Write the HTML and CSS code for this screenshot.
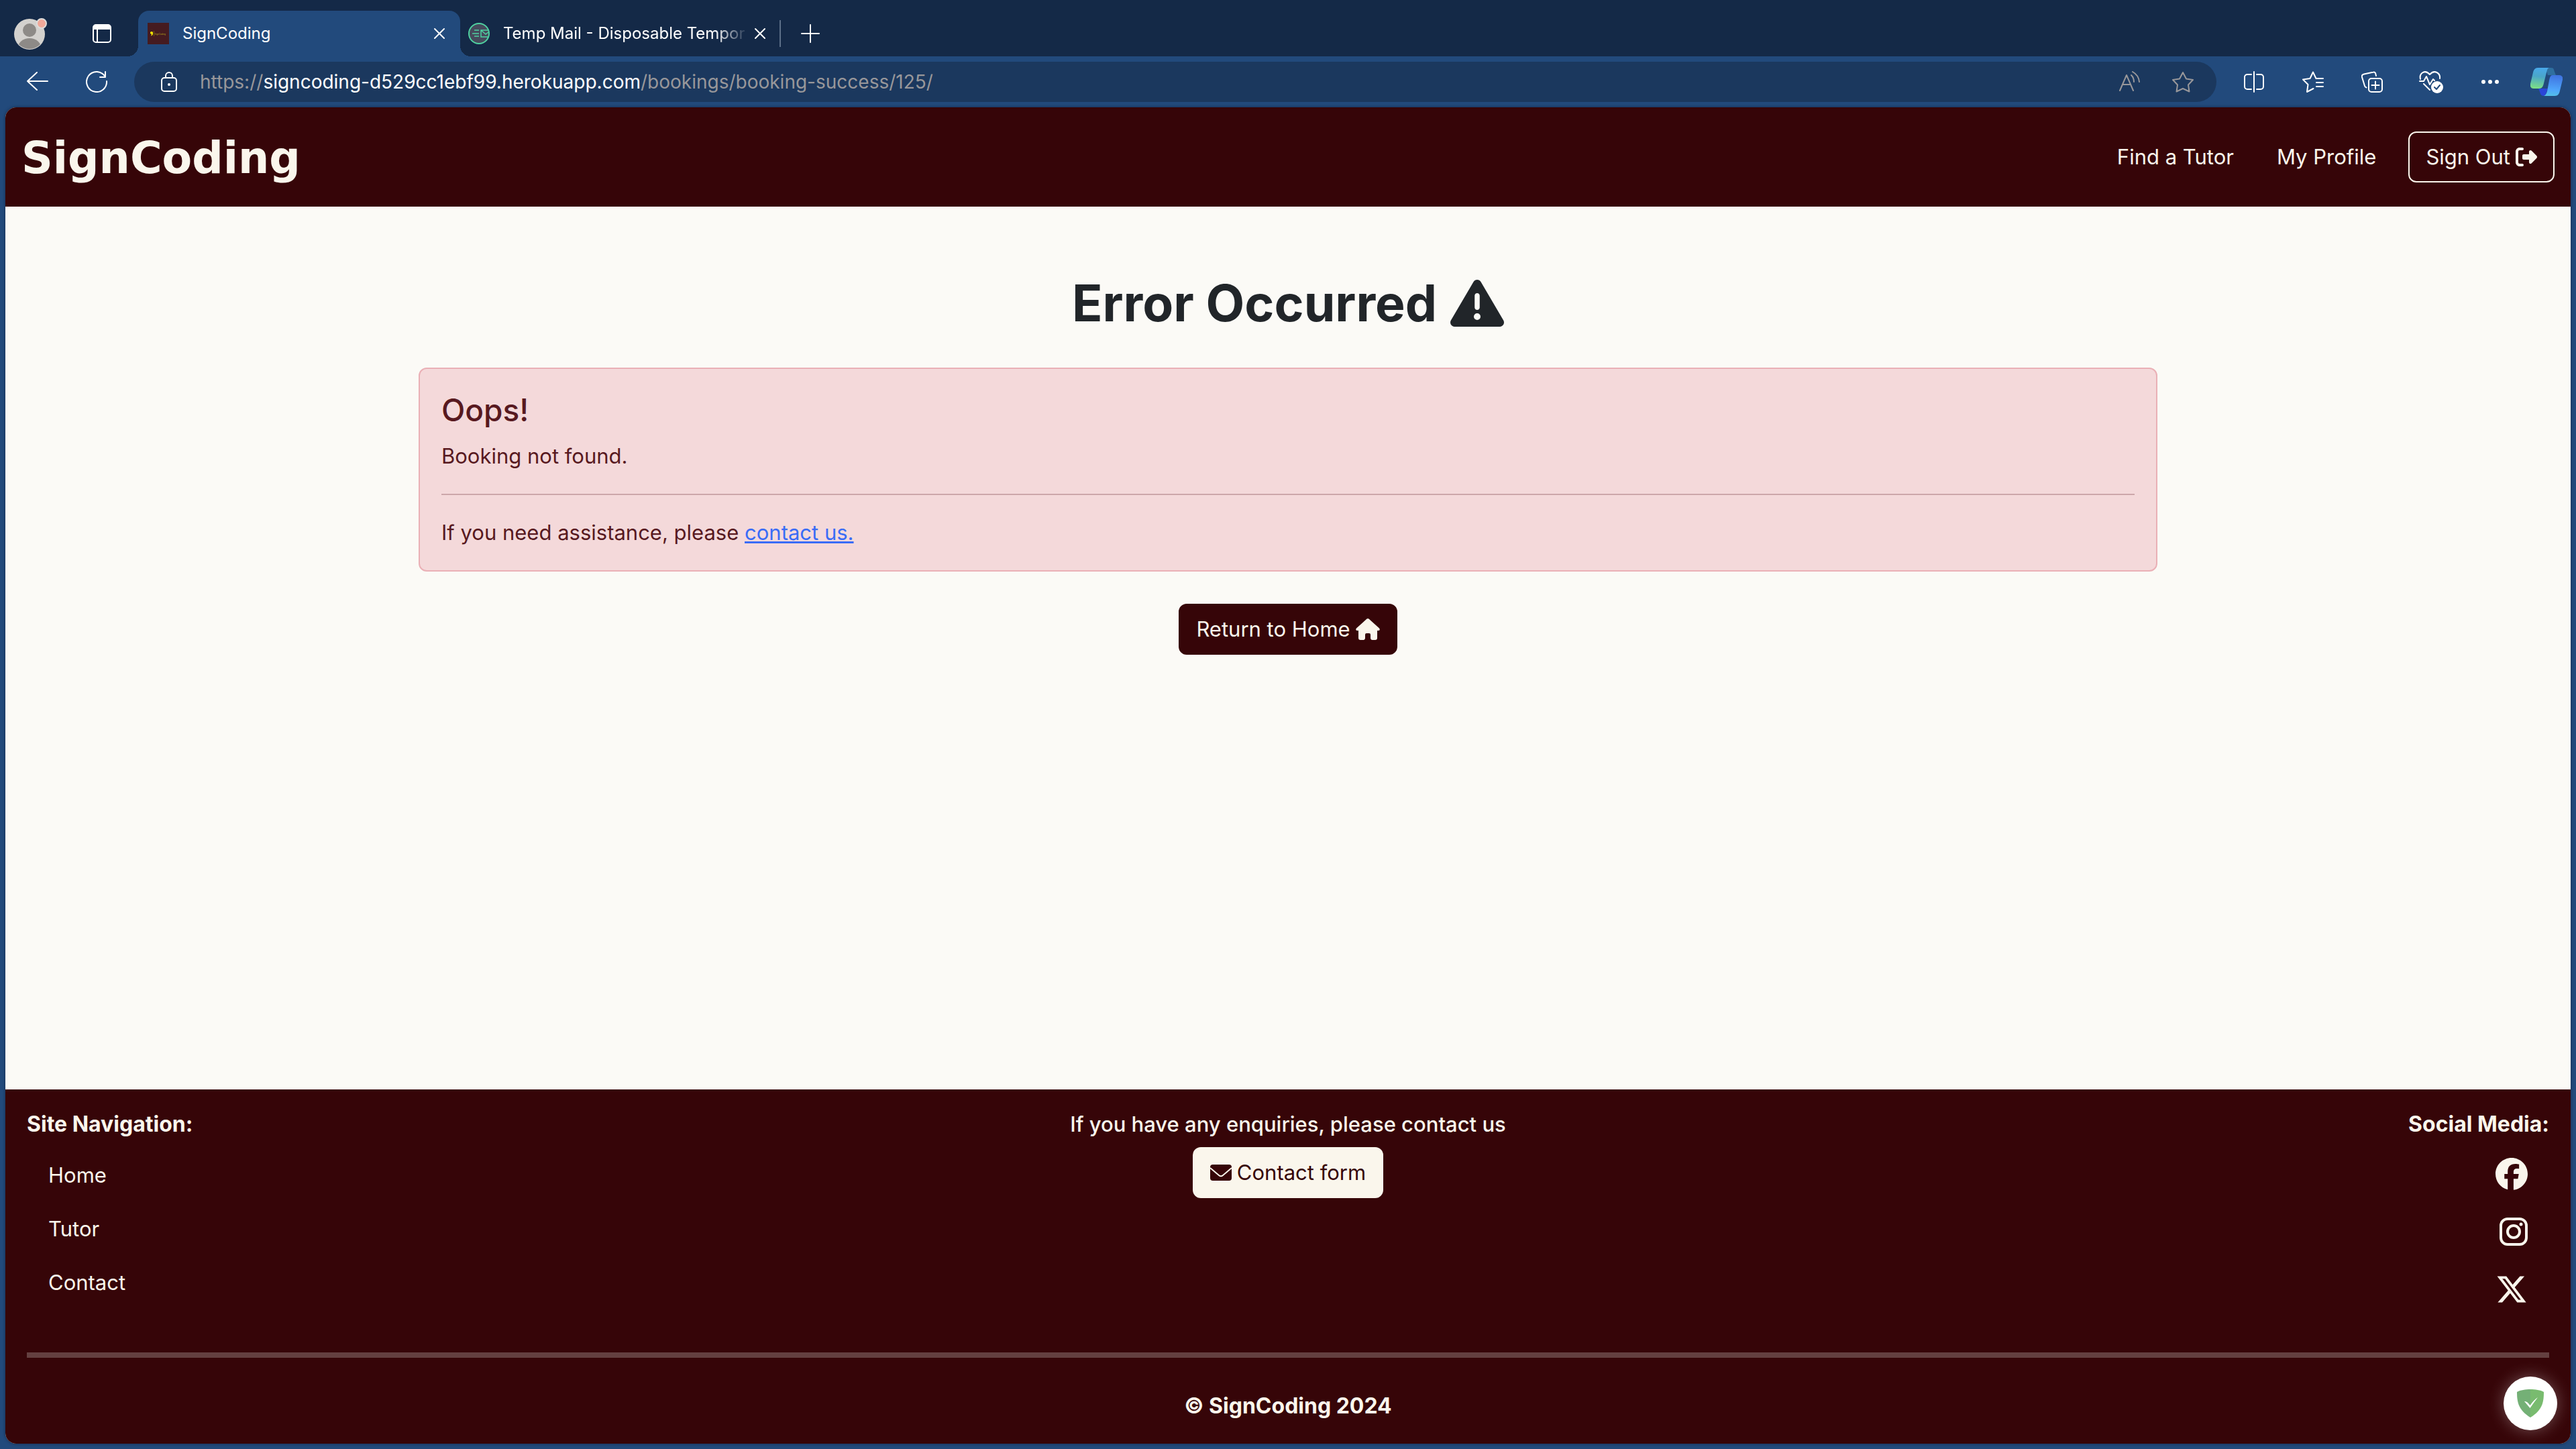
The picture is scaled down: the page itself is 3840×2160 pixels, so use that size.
FILE: index.html
```html
<!DOCTYPE html>
<html lang="en">
<head>
<meta charset="utf-8">
<title>SignCoding</title>
<link rel="stylesheet" href="styles.css">
</head>
<body>
<div class="tabbar">
  <button class="icon-btn profile" aria-label="Profile">
    <svg width="50" height="50" viewBox="0 0 50 50"><defs><clipPath id="face"><circle cx="23" cy="26" r="22"/></clipPath></defs><circle cx="23" cy="26" r="23" fill="#d3d1ce"/><g clip-path="url(#face)" fill="#8d8a87"><circle cx="23" cy="20" r="10"/><ellipse cx="23" cy="46" rx="17" ry="14"/></g><circle cx="41" cy="10" r="7" fill="#f0a899" stroke="#dddcda" stroke-width="2"/></svg>
  </button>
  <button class="icon-btn tab-actions" aria-label="Tab actions">
    <svg width="28" height="28" viewBox="0 0 28 28"><rect x="1" y="1" width="26" height="26" rx="4" fill="none" stroke="#fff" stroke-width="2"/><path d="M1 8V5a4 4 0 0 1 4-4h18a4 4 0 0 1 4 4v3z" fill="#fff"/><path d="M7 8v19" stroke="#fff" stroke-width="2"/></svg>
  </button>
  <div class="tab tab-active">
    <svg width="32" height="32" viewBox="0 0 32 32"><rect width="32" height="32" fill="#451b20"/><path d="M4 14q2-2 4 0v3q-1 2-3 2.500l1-2.500-2-1z" fill="#f3e600"/><path d="M9.500 12v8" stroke="#8a7a1a" stroke-width=".6"/><text x="10.500" y="17.500" font-family="Inter, sans-serif" font-size="3" fill="#b3a51c">SignCoding</text></svg>
    <span class="tab-title">SignCoding</span>
    <button class="icon-btn" aria-label="Close tab"><svg width="18" height="18" viewBox="0 0 18 18"><path d="M2 2l14 14M16 2L2 16" stroke="#fff" stroke-width="2" stroke-linecap="round"/></svg></button>
  </div>
  <div class="tab tab-idle">
    <svg width="32" height="32" viewBox="0 0 32 32" fill="none" stroke="#4fd1a1" stroke-width="2"><circle cx="16" cy="16" r="15" fill="#464a5c"/><path d="M30 11H19v10h11M19 11l7 6 4-3M9 11h7M6 16h10M9 20h7" stroke-width="1.500"/></svg>
    <span class="tab-title tab-fade">Temp Mail - Disposable Tempor</span>
    <button class="icon-btn" aria-label="Close tab"><svg width="18" height="18" viewBox="0 0 18 18"><path d="M2 2l14 14M16 2L2 16" stroke="#fff" stroke-width="2" stroke-linecap="round"/></svg></button>
  </div>
  <button class="icon-btn new-tab" aria-label="New tab"><svg width="28" height="28" viewBox="0 0 28 28"><path d="M14 1v26M1 14h26" stroke="#fff" stroke-width="2" stroke-linecap="round"/></svg></button>
</div>

<div class="toolbar">
  <button class="icon-btn back" aria-label="Back"><svg width="32" height="32" viewBox="0 0 32 32" fill="none" stroke="#fff" stroke-width="2" stroke-linecap="round" stroke-linejoin="round"><path d="M31 15H1M15 2L1 15l14 13"/></svg></button>
  <button class="icon-btn reload" aria-label="Reload"><svg width="32" height="32" viewBox="0 0 32 32" fill="none" stroke="#fff" stroke-width="2" stroke-linecap="round" stroke-linejoin="round"><path d="M31 15A15 15 0 1 1 25 4l4 4M29 1v8h-8"/></svg></button>
  <div class="address">
    <svg width="24" height="30" viewBox="0 0 24 30" fill="none" stroke="#fff" stroke-width="2"><rect x="1" y="9" width="22" height="20" rx="4"/><path d="M7 9V6a5 5 0 0 1 10 0v3"/><circle cx="12" cy="19" r="2" fill="#fff" stroke="none"/></svg>
    <div class="url" role="textbox" aria-label="Address"><span class="dim">https://</span>signcoding-d529cc1ebf99.herokuapp.com<span class="dim">/bookings/booking-success/125/</span></div>
    <button class="icon-btn" aria-label="Read aloud"><svg width="32" height="32" viewBox="0 0 32 32" fill="none" stroke="#98979a" stroke-width="2" stroke-linecap="round" stroke-linejoin="round"><path d="M1 29L11 6l10 23M5 20h12M18 6q4 4 4 10M20 1q9 5 10 15"/></svg></button>
    <button class="icon-btn" aria-label="Add to favorites"><svg width="34" height="32" viewBox="0 0 34 32" fill="none" stroke="#98979a" stroke-width="2" stroke-linejoin="round"><path d="M17 2l5 9.500 10 1.500-7 7.500 1.500 10L17 26l-9.500 4.500L9 20.500 2 13l10-1.500z"/></svg></button>
  </div>
  <div class="tools">
    <button class="icon-btn" aria-label="Split screen"><svg width="30" height="32" viewBox="0 0 30 32" fill="none" stroke="#fff" stroke-width="2" stroke-linecap="round"><path d="M15 1v30M11 5H5a4 4 0 0 0-4 4v14a4 4 0 0 0 4 4h6M19 5h6a4 4 0 0 1 4 4v14a4 4 0 0 1-4 4h-6"/></svg></button>
    <button class="icon-btn" aria-label="Favorites"><svg width="32" height="32" viewBox="0 0 32 32" fill="none" stroke="#fff" stroke-width="2" stroke-linecap="round" stroke-linejoin="round"><path d="M31 11H20.500L16 1.500 11.500 11 1 12.500 8.500 20 7 31l9.500-5M21 17h10M21 23h10"/></svg></button>
    <button class="icon-btn" aria-label="Collections"><svg width="32" height="32" viewBox="0 0 32 32" fill="none" stroke="#fff" stroke-width="2" stroke-linecap="round" stroke-linejoin="round"><rect x="11" y="11" width="20" height="20" rx="4"/><path d="M21 15.500v11M15.500 21h11M22 7l-1-4q-1-2-3-1.500L4 4.500Q0 5.500 1 9l4 13q.5 2 2.500 2.500"/></svg></button>
    <button class="icon-btn" aria-label="Browser essentials"><svg width="36" height="34" viewBox="0 0 36 34" fill="none" stroke="#fff" stroke-width="2" stroke-linecap="round" stroke-linejoin="round"><path d="M2 13C0 4 9-2 16 6c7-8 16-2 15 6M1 16h6l4-7 5 12 5-8 2 2M7 20l9 9"/><circle cx="27" cy="25" r="9" fill="#fff" stroke="none"/><path d="M23 25l3 3 5-6" stroke="#224a7c"/></svg></button>
    <button class="icon-btn" aria-label="More"><svg width="28" height="8" viewBox="0 0 28 8" fill="#fff"><circle cx="4" cy="4" r="3"/><circle cx="14" cy="4" r="3"/><circle cx="24" cy="4" r="3"/></svg></button>
    <button class="icon-btn copilot" aria-label="Copilot"><svg width="48" height="42" viewBox="0 0 48 42"><defs><linearGradient id="cpA" x1=".3" y1="0" x2=".2" y2="1"><stop offset="0" stop-color="#49a8e8"/><stop offset=".4" stop-color="#4aa6c9"/><stop offset="1" stop-color="#7fe183"/></linearGradient><linearGradient id="cpB" x1=".5" y1="0" x2=".4" y2="1"><stop offset="0" stop-color="#3f73e0"/><stop offset=".7" stop-color="#4fa6fb"/><stop offset="1" stop-color="#53c0e8"/></linearGradient></defs><path d="M22 0h9c4 0 4 3 5 6l2 5H26z" fill="#2f6f9f"/><path d="M26 31l-4 11h-2c-4 0-5-3-6-6l-2-5z" fill="#2a45d8"/><path d="M11 0h17c-3 1-3 4-4 7l-4 16c-1 5-3 8-7 8H5c-4 0-6-3-5-7L4 7c1-4 3-7 7-7z" fill="url(#cpA)"/><path d="M33 11h10c4 0 6 3 5 7l-4 16c-1 5-3 8-8 8H20c3-1 4-4 5-7l3-16c1-5 2-8 5-8z" fill="url(#cpB)"/></svg></button>
  </div>
</div>

<div class="page">
  <header class="site-header">
    <a class="logo" href="#">SignCoding</a>
    <nav class="site-nav">
      <a class="nav-link" href="#">Find a Tutor</a>
      <a class="nav-link" href="#">My Profile</a>
      <button class="btn btn-outline">Sign Out <svg width="32" height="32" viewBox="0 0 512 512" fill="currentColor"><path d="M377.9 105.900L500.700 228.700c7.200 7.200 11.300 17.100 11.300 27.300s-4.100 20.100-11.300 27.300L377.900 406.100c-6.400 6.400-15 9.900-24 9.900c-18.700 0-33.900-15.200-33.900-33.900l0-62.100-128 0c-17.700 0-32-14.300-32-32l0-64c0-17.700 14.300-32 32-32l128 0 0-62.100c0-18.700 15.200-33.900 33.900-33.900c9 0 17.600 3.600 24 9.900zM160 96L96 96c-17.700 0-32 14.300-32 32l0 256c0 17.700 14.300 32 32 32l64 0c17.700 0 32 14.300 32 32s-14.300 32-32 32l-64 0c-53 0-96-43-96-96L0 128C0 75 43 32 96 32l64 0c17.700 0 32 14.300 32 32s-14.300 32-32 32z"/></svg></button>
    </nav>
  </header>

  <main class="content">
    <h1 class="title">Error Occurred <svg width="80" height="80" viewBox="0 0 512 512" fill="currentColor"><path d="M256 32c14.200 0 27.300 7.500 34.500 19.800l216 368c7.300 12.400 7.300 27.700 .2 40.100S486.300 480 472 480L40 480c-14.300 0-27.600-7.700-34.700-20.100s-7-27.800 .2-40.100l216-368C228.700 39.500 241.800 32 256 32zm0 128c-13.300 0-24 10.700-24 24l0 112c0 13.300 10.700 24 24 24s24-10.700 24-24l0-112c0-13.300-10.700-24-24-24zm32 224a32 32 0 1 0 -64 0 32 32 0 1 0 64 0z"/></svg></h1>
    <section class="alert" role="alert">
      <h2 class="alert-title">Oops!</h2>
      <p>Booking not found.</p>
      <hr class="alert-rule">
      <p>If you need assistance, please <a class="alert-link" href="#">contact us.</a></p>
    </section>
    <button class="btn btn-dark">Return to Home <svg width="36" height="32" viewBox="0 0 36 32" fill="currentColor"><path d="M16.500.600q1.500-1.200 3 0L35 14.500q2 3-1 3.500h-2v11q0 3-3 3h-4q-3 0-3-3v-5q0-2-2-2h-4q-2 0-2 2v5q0 3-3 3H7q-3 0-3-3V18H2q-3-.5-1-3.500z"/></svg></button>
  </main>

  <footer class="site-footer">
    <div class="footer-cols">
      <div class="footer-col">
        <h3 class="footer-title">Site Navigation:</h3>
        <ul class="footer-links">
          <li><a href="#">Home</a></li>
          <li><a href="#">Tutor</a></li>
          <li><a href="#">Contact</a></li>
        </ul>
      </div>
      <div class="footer-mid">
        <p class="enquiry">If you have any enquiries, please contact us</p>
        <button class="btn btn-light"><svg width="32" height="24" viewBox="0 0 32 24"><rect width="32" height="24" rx="4" fill="currentColor"/><path d="M0 5l13 11q3 2.500 6 0L32 5" fill="none" stroke="#faf6ec" stroke-width="2"/></svg> Contact form</button>
      </div>
      <div class="footer-col footer-social">
        <h3 class="footer-title">Social Media:</h3>
        <ul class="social-links">
          <li><a href="#" aria-label="Facebook"><svg width="48" height="48" viewBox="0 0 512 512" fill="currentColor"><path d="M512 256C512 114.600 397.400 0 256 0S0 114.600 0 256C0 376 82.700 476.800 194.200 504.500V334.200H141.400V256h52.800V222.300c0-87.100 39.400-127.500 125-127.500c16.200 0 44.200 3.200 55.700 6.400V172c-6-.6-16.500-1-29.600-1c-42 0-58.200 15.900-58.200 57.200V256h83.600l-14.400 78.200H287V510.100C413.800 494.800 512 386.900 512 256h0z"/></svg></a></li>
          <li><a href="#" aria-label="Instagram"><svg width="42" height="42" viewBox="0 0 42 42" fill="none" stroke="currentColor" stroke-width="4"><rect x="2" y="2" width="38" height="38" rx="10"/><circle cx="21" cy="21" r="9"/><circle cx="32" cy="10" r="2.500" fill="currentColor" stroke="none"/></svg></a></li>
          <li><a href="#" aria-label="X"><svg width="48" height="48" viewBox="0 0 512 512" fill="currentColor"><path d="M389.200 48h70.600L305.600 224.200 487 464H345L233.700 318.600 106.500 464H35.800L200.700 275.500 26.800 48H172.400L272.900 180.900 389.200 48zM364.400 421.800h39.100L151.100 88h-42L364.400 421.800z"/></svg></a></li>
        </ul>
      </div>
    </div>
    <hr class="footer-rule">
    <p class="copyright">© SignCoding 2024</p>
  </footer>

  <button class="shield" aria-label="Protection status"><svg width="42" height="44" viewBox="0 0 42 44"><path d="M21 1C14 1 6 2 1 5c0 15 2 27 20 38z" fill="#74b076"/><path d="M21 1c7 0 15 1 20 4 0 15-2 27-20 38z" fill="#79bb6f"/><path d="M12 19q4-1 8.500 6Q26 17 32 13q-6 8-11.500 16z" fill="#fff"/></svg></button>
</div>
</body>
</html>
```
FILE: styles.css
```css
* { box-sizing: border-box; }

body {
  margin: 0;
  min-height: 100vh;
  display: flex;
  flex-direction: column;
  background: #224a7c;
  color: #fff;
  font-family: Inter, "Noto Sans", sans-serif;
  font-size: 31px;
  line-height: 48px;
}

h1, h2, h3, p, ul { margin: 0; padding: 0; }
ul { list-style: none; }
a { color: inherit; text-decoration: none; }
svg { display: block; flex: none; }
button { font: inherit; color: inherit; cursor: pointer; }

.icon-btn {
  display: flex;
  align-items: center;
  justify-content: center;
  padding: 0;
  border: 0;
  background: none;
}

/* Browser tabs */
.tabbar {
  display: flex;
  height: 84px;
  padding: 16px 0 0 21px;
  background: #142947;
  font-size: 24px;
  line-height: 32px;
}
.tab-actions { margin: 0 40px 0 67px; }
.tab {
  display: flex;
  align-items: center;
  width: 480px;
  padding: 0 22px 0 14px;
}
.tab-idle { padding: 0 24px 0 12px; }
.tab-active {
  position: relative;
  background: #224a7c;
  border-radius: 16px 16px 0 0;
}
.tab-active::before,
.tab-active::after {
  content: "";
  position: absolute;
  bottom: 0;
  width: 16px;
  height: 16px;
}
.tab-active::before {
  right: 100%;
  background: radial-gradient(circle at 0 0, transparent 16px, #224a7c 16px);
}
.tab-active::after {
  left: 100%;
  background: radial-gradient(circle at 100% 0, transparent 16px, #224a7c 16px);
}
.tab-title {
  flex: 1;
  margin: 0 8px 0 20px;
  white-space: nowrap;
}
.tab-fade {
  -webkit-mask-image: linear-gradient(to right, #000 86%, transparent);
  mask-image: linear-gradient(to right, #000 86%, transparent);
}
.new-tab {
  align-self: center;
  height: 40px;
  padding-left: 30px;
  margin-left: -4px;
  border-left: 2px solid #5c6f88;
}

/* Address bar */
.toolbar {
  display: flex;
  align-items: center;
  height: 76px;
  padding: 0 4px 0 40px;
}
.reload { margin: 0 40px 0 56px; }
.address {
  flex: 1;
  display: flex;
  align-items: center;
  gap: 46px;
  height: 60px;
  padding: 0 33px 0 40px;
  border-radius: 30px;
  background: #1b385e;
}
.url {
  flex: 1;
  margin-left: -12px;
  font-size: 28px;
  line-height: 40px;
  white-space: nowrap;
}
.dim { color: #98979a; }
.tools {
  display: flex;
  align-items: center;
  margin-left: 12px;
}
.tools .icon-btn { width: 88px; }
.tools .copilot { width: 80px; }

/* Web page */
.page {
  position: relative;
  flex: 1;
  display: flex;
  flex-direction: column;
  margin: 0 8px 8px;
  border-radius: 16px;
  overflow: hidden;
  background: #fbfaf6;
  color: #212529;
  box-shadow: 0 0 4px #142947;
}
.site-header {
  display: flex;
  align-items: center;
  justify-content: space-between;
  min-height: 148px;
  padding: 0 24px;
  background: #360508;
  color: #faf6ec;
}
.logo {
  padding-top: 4px;
  font-family: "DejaVu Sans", sans-serif;
  font-weight: 700;
  font-size: 65px;
  line-height: 80px;
}
.site-nav { display: flex; align-items: center; }
.nav-link { padding: 0 32px; }

.btn {
  display: flex;
  align-items: center;
  gap: 8px;
  padding: 12px 24px;
  border: 2px solid;
  border-radius: 12px;
  white-space: nowrap;
}
.btn-outline { margin-left: 16px; border-color: #faf6ec; background: none; color: #faf6ec; }
.btn-dark { border-color: #360508; background: #360508; color: #faf6ec; }
.btn-light { border-color: #faf6ec; background: #faf6ec; color: #360508; }

.content {
  flex: 1;
  display: flex;
  flex-direction: column;
  align-items: center;
  gap: 48px;
  width: 100%;
  max-width: 2640px;
  margin: 0 auto;
  padding: 96px 24px 48px;
}
.title {
  display: flex;
  align-items: center;
  gap: 20px;
  font-size: 75px;
  font-weight: 700;
  line-height: 96px;
}
.alert {
  align-self: stretch;
  padding: 32px;
  border: 2px solid #eab0b6;
  border-radius: 12px;
  background: #f4d9da;
  color: #58191f;
}
.alert-title {
  margin-bottom: 16px;
  font-size: 46px;
  font-weight: 500;
  line-height: 58px;
}
.alert-rule {
  margin: 32px 0;
  border: 0;
  border-top: 2px solid #cca7aa;
}
.alert-link { color: #3a6cf6; text-decoration: underline; }

/* Footer */
.site-footer {
  padding: 28px 32px 32px;
  background: #360508;
  color: #faf6ec;
}
.footer-cols {
  display: grid;
  grid-template-columns: 1fr auto 1fr;
}
.footer-title { font-size: 32px; font-weight: 700; }
.footer-links {
  display: flex;
  flex-direction: column;
  gap: 32px;
  padding: 28px 32px 0;
}
.footer-mid {
  display: flex;
  flex-direction: column;
  align-items: center;
  gap: 10px;
}
.enquiry { font-weight: 500; }
.footer-social { text-align: right; }
.social-links {
  display: flex;
  flex-direction: column;
  gap: 38px;
  padding: 26px 32px 0;
}
.social-links a {
  display: flex;
  align-items: center;
  justify-content: flex-end;
  height: 48px;
}
.footer-rule {
  margin: 70px 0 48px;
  border: 0;
  border-top: 8px solid #644040;
}
.copyright { text-align: center; font-size: 32px; font-weight: 700; }

.shield {
  position: absolute;
  right: 20px;
  bottom: 20px;
  display: flex;
  align-items: center;
  justify-content: center;
  width: 80px;
  height: 80px;
  padding: 0;
  border: 0;
  border-radius: 50%;
  background: #fff;
  box-shadow: 0 0 24px rgba(255, 255, 255, .3);
}
```
